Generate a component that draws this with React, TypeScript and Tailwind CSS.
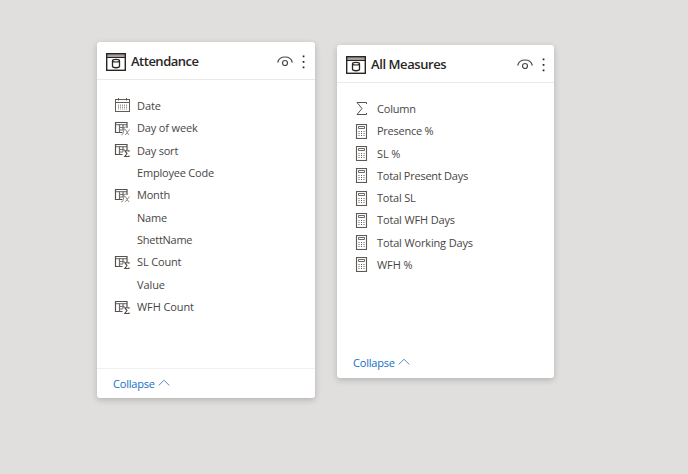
import React from "react";

type Kind = "date" | "fx" | "sum" | "sigma" | "calc" | "none";
type Field = { name: string; kind: Kind; tracking?: string };

const attendance: Field[] = [
  { name: "Date", kind: "date" },
  { name: "Day of week", kind: "fx", tracking: "tracking-[-0.15px]" },
  { name: "Day sort", kind: "sum", tracking: "tracking-[-0.2px]" },
  { name: "Employee Code", kind: "none", tracking: "tracking-[-0.2px]" },
  { name: "Month", kind: "fx", tracking: "tracking-[-0.2px]" },
  { name: "Name", kind: "none", tracking: "tracking-[-0.2px]" },
  { name: "ShettName", kind: "none", tracking: "tracking-[-0.25px]" },
  { name: "SL Count", kind: "sum", tracking: "tracking-[-0.15px]" },
  { name: "Value", kind: "none" },
  { name: "WFH Count", kind: "sum" },
];

const measures: Field[] = [
  { name: "Column", kind: "sigma", tracking: "tracking-[-0.2px]" },
  { name: "Presence %", kind: "calc", tracking: "tracking-[-0.25px]" },
  { name: "SL %", kind: "calc" },
  { name: "Total Present Days", kind: "calc", tracking: "tracking-[-0.25px]" },
  { name: "Total SL", kind: "calc", tracking: "tracking-[-0.2px]" },
  { name: "Total WFH Days", kind: "calc", tracking: "tracking-[-0.15px]" },
  { name: "Total Working Days", kind: "calc", tracking: "tracking-[-0.15px]" },
  { name: "WFH %", kind: "calc" },
];

function TableIcon() {
  return (
    <svg width="20" height="18" viewBox="0 0 20 18" fill="none" stroke="#292522" className="shrink-0">
      <path d="M1 1h18v3H1z" fill="#a5a09d" stroke="none" />
      <rect x="0.7" y="0.7" width="18.6" height="16.6" strokeWidth="1.4" />
      <path d="M1 4.500h18" strokeWidth="1" />
      <ellipse cx="10" cy="7.700" rx="3.500" ry="1.300" strokeWidth="1.200" />
      <path d="M6.500 7.700v5.600c0 1.900 7 1.900 7 0V7.700" strokeWidth="1.300" />
    </svg>
  );
}

function EyeIcon() {
  return (
    <svg width="16" height="11" viewBox="0 0 16 11" fill="none" stroke="#4a4745" className="shrink-0">
      <path d="M0.700 6.500C1.500 3 4.500 1 8 1s6.500 2 7.300 5.500" strokeWidth="1.200" />
      <circle cx="8" cy="7" r="2.500" strokeWidth="1.200" />
    </svg>
  );
}

function FieldIcon({ kind }: { kind: Kind }) {
  if (kind === "date")
    return (
      <svg width="16" height="15" viewBox="0 0 16 15" fill="none" stroke="#5f5c5a" className="-mt-[2px]">
        <rect x="1.500" y="1.500" width="14" height="12" />
        <path d="M1.500 4.500h14" />
        <path d="M4.500 0v2.500M12.500 0v2.500" />
        <path d="M4.500 6.500v5M6.500 6.500v5M8.500 6.500v5M10.500 6.500v5M12.500 6.500v5" strokeDasharray="1.500 0.500" stroke="#9b9896" />
      </svg>
    );
  if (kind === "fx" || kind === "sum")
    return (
      <svg width="16" height="15" viewBox="0 0 16 15" fill="none" stroke="#55514f">
        <path d="M13 7V1.500H1.500v10H8.500" strokeWidth="1.200" />
        <path d="M1.500 3.700H13" strokeWidth="0.900" />
        <path d="M5.500 3.500v8M9 3.500v5" stroke="#6b6765" strokeWidth="1.200" />
        <path d="M5 6.500h5.500M5 9h4" stroke="#77736f" />
        {kind === "sum" ? (
          <path d="M15 8.700V7.700h-4.200l2.200 2.900-2.200 2.900H15v-1" strokeWidth="1.100" stroke="#4e4a48" />
        ) : (
          <g stroke="#8b8784" strokeWidth="1">
            <path d="M12 6c-1.800-.6-2.100 1-2.400 3.500s-.6 4.500-2.300 4.300M8 8.700h3.400" />
            <path d="M11.200 8.700c1.700 0 1.900 5 4 5M15.700 8.700c-1.700 0-2.900 5-4.700 5" />
          </g>
        )}
      </svg>
    );
  if (kind === "sigma")
    return (
      <svg width="16" height="15" viewBox="0 0 16 15" fill="none" stroke="#55514f" className="-mt-[1px]">
        <path d="M12.500 3V1.500H3l5 6-5 6h9.500v-1.500" />
      </svg>
    );
  if (kind === "calc")
    return (
      <svg width="16" height="15" viewBox="0 0 16 15" fill="none" stroke="#5d5957">
        <rect x="2.500" y="0.500" width="10" height="14" strokeWidth="1.100" />
        <path d="M4.500 2.500h6v2h-6z" strokeWidth="0.900" />
        <path d="M4.500 7.500h1M7 7.500h1M9.500 7.500h1M4.500 9.500h1M7 9.500h1M9.500 9.500h1M4.500 11.500h1M7 11.500h1M9.500 11.500h1" />
      </svg>
    );
  return null;
}

type CardProps = { title: string; fields: Field[]; className: string; titleClass: string; headerClass: string; rowClass: string; footerClass: string };

function Card({ title, fields, className, titleClass, headerClass, rowClass, footerClass }: CardProps) {
  return (
    <section className={`flex shrink-0 flex-col rounded-[3px] bg-white shadow-[0_2px_6px_rgba(0,0,0,0.2)] ${className}`}>
      <header className={`flex h-[38px] shrink-0 items-center border-b border-[#ebe9e7] pl-[9px] pt-[2px] ${headerClass}`}>
        <TableIcon />
        <h2 className={`ml-[5px] -mt-[2px] flex-1 whitespace-nowrap text-[13px] font-[560] leading-5 text-[#292624] ${titleClass}`}>{title}</h2>
        <EyeIcon />
        <svg width="3" height="14" viewBox="0 0 3 14" fill="#252321" className="ml-[9px]">
          <path d="M0.700 0.500h1.700v1.700H0.700zM0.700 6h1.700v1.700H0.700zM0.700 11.500h1.700v1.700H0.700z" />
        </svg>
      </header>
      <ul className="flex flex-1 flex-col pt-[15px]">
        {fields.map((f) => (
          <li key={f.name} className={`flex items-center pl-[17px] ${rowClass}`}>
            <span className="flex w-4 shrink-0 justify-center"><FieldIcon kind={f.kind} /></span>
            <span className={`ml-[7px] whitespace-nowrap text-[11px] leading-4 text-[#484644] ${f.tracking ?? "tracking-[-0.1px]"}`}>{f.name}</span>
          </li>
        ))}
      </ul>
      <footer className={`flex h-[30px] shrink-0 items-center gap-[3px] border-t pl-4 text-[11px] tracking-[-0.2px] text-[#0f6fc9] ${footerClass}`}>
        <span>Collapse</span>
        <svg width="12" height="8" viewBox="0 0 12 8" fill="none" stroke="#6087bd" className="-mt-[3px]">
          <path d="M0.700 6.500L6 1.200l5.300 5.300" />
        </svg>
      </footer>
    </section>
  );
}

export default function App() {
  return (
    <main className="flex h-[474px] w-[688px] items-start gap-[22px] overflow-hidden bg-[#e0dfdd] pl-[97px] pt-[42px] font-['Open_Sans','Noto_Sans',sans-serif]">
      <Card title="Attendance" fields={attendance} className="h-[356px] w-[218px]" titleClass="tracking-[-0.5px]" headerClass="pr-[10px]" rowClass="h-[22.34px]" footerClass="border-[#f0efee] pt-[2px]" />
      <Card title="All Measures" fields={measures} className="mt-[3px] h-[333px] w-[217px]" titleClass="tracking-[-0.42px]" headerClass="pr-[9px]" rowClass="h-[22.28px]" footerClass="border-transparent" />
    </main>
  );
}
